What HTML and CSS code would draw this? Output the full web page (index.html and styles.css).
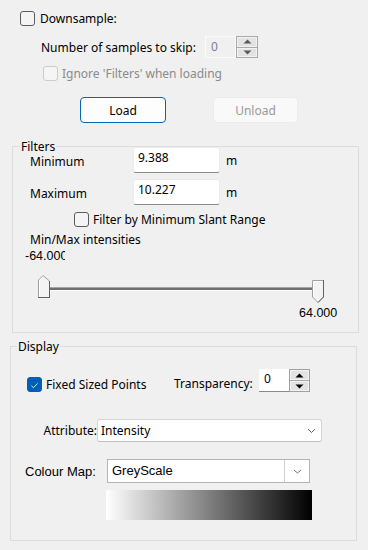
FILE: index.html
```html
<!DOCTYPE html>
<html>
<head>
<meta charset="utf-8">
<link rel="stylesheet" href="styles.css">
</head>
<body>
<div class="panel">
  <div class="top">
    <div class="row r1"><span class="cb"></span><span>Downsample:</span></div>
    <div class="row r2">
      <span class="r2-label">Number of samples to skip:</span>
      <div class="spin spin-dis">
        <span class="spin-val">0</span>
        <span class="spin-btns">
          <span class="sb"><svg width="9" height="5" viewBox="0 0 9 5"><path d="M0.5 4.5 L4.5 0.5 L8.5 4.5 Z" fill="#5a5a5a"/></svg></span>
          <span class="sb"><svg width="9" height="5" viewBox="0 0 9 5"><path d="M0.5 0.5 L4.5 4.5 L8.5 0.5 Z" fill="#5a5a5a"/></svg></span>
        </span>
      </div>
    </div>
    <div class="row r3"><span class="cb cb-dis"></span><span class="dis-text">Ignore 'Filters' when loading</span></div>
    <div class="row r4">
      <button class="btn btn-primary">Load</button>
      <button class="btn btn-disabled">Unload</button>
    </div>
  </div>

  <section class="group filters">
    <div class="gtitle"><span>Filters</span></div>
    <div class="frow">
      <span class="flabel">Minimum</span>
      <span class="tbox">9.388</span>
      <span class="unit">m</span>
    </div>
    <div class="frow frow2">
      <span class="flabel">Maximum</span>
      <span class="tbox">10.227</span>
      <span class="unit">m</span>
    </div>
    <div class="cbrow"><span class="cb"></span><span>Filter by Minimum Slant Range</span></div>
    <div class="mmlabel">Min/Max intensities</div>
    <div class="minval"><span>-64.000</span></div>
    <div class="slider">
      <svg width="300" height="30" viewBox="0 0 300 30">
        <rect x="19" y="12" width="264" height="1" fill="#a6a6a6"/>
        <rect x="19" y="13" width="264" height="2" fill="#6e6e6e"/>
        <rect x="19" y="15" width="264" height="1" fill="#ffffff"/>
        <path d="M8.5 22.5 L8.5 5 L13 0.5 L19.5 6 L19.5 22.5 Z" fill="#f3f3f3" stroke="#a0a0a0"/>
        <path d="M9.5 21.5 L9.5 5.5 L13 2" fill="none" stroke="#ffffff"/>
        <path d="M8 22.5 L20 22.5 M19.5 6 L19.5 23" stroke="#606060" fill="none"/>
        <path d="M282.5 5.5 L293.5 5.5 L293.5 22 L288 27.5 L282.5 22 Z" fill="#f3f3f3" stroke="#a0a0a0"/>
        <path d="M283.5 21.5 L283.5 6.5 L292.5 6.5" fill="none" stroke="#ffffff"/>
        <path d="M293.5 5 L293.5 22 L288 27.5" stroke="#606060" fill="none"/>
      </svg>
    </div>
    <div class="maxval">64.000</div>
  </section>

  <section class="group display">
    <div class="gtitle"><span>Display</span></div>
    <div class="drow1">
      <div class="fsp"><span class="cb cb-on"><svg width="15" height="15" viewBox="0 0 15 15"><path d="M4 7.8 L6.3 10 L11 5.2" fill="none" stroke="#ffffff" stroke-width="1"/></svg></span><span>Fixed Sized Points</span></div>
      <span class="tlabel">Transparency:</span>
      <div class="spin spin-on">
        <span class="spin-val">0</span>
        <span class="spin-btns">
          <span class="sb"><svg width="9" height="5" viewBox="0 0 9 5"><path d="M0.5 4.5 L4.5 0.5 L8.5 4.5 Z" fill="#000"/></svg></span>
          <span class="sb"><svg width="9" height="5" viewBox="0 0 9 5"><path d="M0.5 0.5 L4.5 4.5 L8.5 0.5 Z" fill="#000"/></svg></span>
        </span>
      </div>
    </div>
    <div class="drow2">
      <span class="alabel">Attribute:</span>
      <div class="combo">
        <span class="combo-text">Intensity</span>
        <svg class="chev" width="9" height="6" viewBox="0 0 9 6"><path d="M1 1 L4.5 4.5 L8 1" fill="none" stroke="#606060" stroke-width="1"/></svg>
      </div>
    </div>
    <div class="drow3">
      <span class="clabel">Colour Map:</span>
      <div class="combo2">
        <span class="combo2-text">GreyScale</span>
        <span class="combo2-btn"><svg width="9" height="5" viewBox="0 0 9 5"><path d="M1 1 L4.5 4 L8 1" fill="none" stroke="#707070" stroke-width="1"/></svg></span>
      </div>
    </div>
    <div class="gradient"></div>
  </section>
</div>
</body>
</html>
```

FILE: styles.css
```css
html, body {
  margin: 0;
  padding: 0;
  background: #f0f0f0;
}
body {
  width: 368px;
  height: 550px;
  overflow: hidden;
  font-family: "Noto Sans", "DejaVu Sans", sans-serif;
  font-size: 12px;
  color: #000;
}
.panel {
  display: flex;
  flex-direction: column;
}
.top {
  height: 146px;
  padding-top: 10px;
  box-sizing: border-box;
}
.row {
  display: flex;
  align-items: center;
}
.r1 {
  height: 17px;
  padding-left: 20px;
  gap: 5px;
}
.cb {
  width: 15px;
  height: 15px;
  box-sizing: border-box;
  border: 1px solid #5c5c5c;
  border-radius: 3px;
  background: #f4f4f4;
  flex: none;
  display: inline-flex;
}
.cb-dis {
  border-color: #cccccc;
  background: #f5f5f5;
}
.cb-on {
  border-color: #005fb8;
  background: #005fb8;
}
.r2 {
  margin-top: 9px;
  height: 22px;
  padding-left: 41px;
}
.r2-label {
  width: 164px;
}
.spin {
  display: flex;
  height: 22px;
}
.spin-val {
  width: 31px;
  box-sizing: border-box;
  padding-left: 5px;
  padding-top: 2px;
  line-height: 16px;
}
.spin-dis .spin-val {
  border: 1px solid #fbfbfb;
  color: #7c7c96;
  background: #f0f0f0;
}
.spin-on {
  height: 23px;
}
.spin-on .spin-val {
  width: 30px;
  background: #ffffff;
  color: #000033;
  border-bottom: 1px solid #8a8a8a;
}
.spin-btns {
  width: 22px;
  box-sizing: border-box;
  border: 1px solid #a9a9a9;
  display: flex;
  flex-direction: column;
  gap: 1px;
  background: #a9a9a9;
}
.spin-on .spin-btns {
  width: 21px;
  border-color: #a0a0a0;
}
.sb {
  flex: 1;
  background: #e3e3e3;
  border: 1px solid #f2f2f2;
  display: flex;
  align-items: center;
  justify-content: center;
}
.r3 {
  margin-top: 8px;
  height: 15px;
  padding-left: 43px;
  gap: 4px;
}
.dis-text {
  color: #8a8a8a;
}
.r4 {
  margin-top: 16px;
  height: 26px;
  padding-left: 80px;
  gap: 47px;
}
.btn {
  width: 86px;
  height: 26px;
  box-sizing: border-box;
  border-radius: 4px;
  font-family: "Noto Sans", sans-serif;
  font-size: 12px;
  padding: 0;
}
.btn-primary {
  background: #fdfdfd;
  border: 1px solid #0067c0;
  color: #000;
}
.btn-disabled {
  width: 85px;
  background: #f9f9f9;
  border: 1px solid #ececec;
  color: #9a9a9a;
}
.group {
  border: 1px solid #dcdcdc;
  box-sizing: border-box;
}
.gtitle {
  height: 0;
}
.gtitle span {
  position: relative;
  top: -9px;
  display: inline-block;
  line-height: 14px;
  background: #f0f0f0;
  padding: 0 1px;
}
.filters {
  margin-left: 12px;
  width: 347px;
  height: 187px;
}
.filters .gtitle span {
  left: 7px;
}
.frow {
  display: flex;
  align-items: center;
  height: 26px;
}
.frow2 {
  margin-top: 6px;
}
.flabel {
  width: 103px;
  padding-left: 17px;
  padding-top: 3px;
  box-sizing: border-box;
  width: 120px;
}
.tbox {
  width: 87px;
  height: 26px;
  box-sizing: border-box;
  background: #ffffff;
  border: 1px solid #ececec;
  border-bottom-color: #8a8a8a;
  border-radius: 3px;
  padding-left: 4px;
  padding-top: 2px;
  line-height: 16px;
}
.unit {
  margin-left: 6px;
  padding-top: 1px;
}
.cbrow {
  display: flex;
  align-items: center;
  gap: 4px;
  height: 15px;
  margin-top: 7px;
  padding-left: 61px;
}
.mmlabel {
  margin-top: 5px;
  height: 16px;
  line-height: 16px;
  padding-left: 17px;
}
.minval {
  height: 16px;
  line-height: 16px;
  padding-left: 12px;
}
.minval span {
  display: inline-block;
  width: 40px;
  overflow: hidden;
  white-space: nowrap;
  font-family: "Liberation Sans", sans-serif;
  font-size: 12.5px;
  vertical-align: top;
}
.slider {
  margin-top: 11px;
  height: 30px;
  padding-left: 17px;
}
.slider svg {
  display: block;
}
.maxval {
  height: 16px;
  line-height: 16px;
  padding-left: 286px;
  font-family: "Liberation Sans", sans-serif;
  font-size: 12.5px;
}
.display {
  margin-top: 13px;
  margin-left: 10px;
  width: 347px;
  height: 195px;
}
.display .gtitle span {
  left: 6px;
}
.drow1 {
  margin-top: 22px;
  height: 23px;
  display: flex;
  align-items: flex-end;
}
.fsp {
  width: 163px;
  flex: none;
  padding-left: 16px;
  box-sizing: border-box;
  display: flex;
  align-items: center;
  gap: 4px;
  height: 16px;
}
.tlabel {
  width: 85px;
  flex: none;
  line-height: 16px;
}
.drow2 {
  margin-top: 27px;
  height: 23px;
  display: flex;
  align-items: center;
}
.alabel {
  width: 86px;
  text-align: right;
}
.combo {
  width: 225px;
  height: 23px;
  box-sizing: border-box;
  background: #ffffff;
  border: 1px solid #d6d6d6;
  border-bottom-color: #c0c0c0;
  border-radius: 3px;
  display: flex;
  align-items: center;
  padding-left: 3px;
  padding-right: 5px;
}
.combo-text {
  flex: 1;
}
.chev {
  display: block;
}
.drow3 {
  margin-top: 17px;
  height: 24px;
  display: flex;
  align-items: center;
}
.clabel {
  width: 96px;
  padding-left: 14px;
  box-sizing: border-box;
  font-family: "Liberation Sans", sans-serif;
  font-size: 13px;
}
.combo2 {
  width: 203px;
  height: 24px;
  box-sizing: border-box;
  background: #ffffff;
  border: 1px solid #b4b4b4;
  display: flex;
}
.combo2-text {
  flex: 1;
  padding-left: 4px;
  font-family: "Liberation Sans", sans-serif;
  font-size: 13px;
  line-height: 22px;
}
.combo2-btn {
  width: 24px;
  border-left: 1px solid #d0d0d0;
  display: flex;
  align-items: center;
  justify-content: center;
}
.gradient {
  margin-top: 7px;
  margin-left: 95px;
  width: 206px;
  height: 30px;
  background: linear-gradient(to right, #ffffff, #000000);
}
```
